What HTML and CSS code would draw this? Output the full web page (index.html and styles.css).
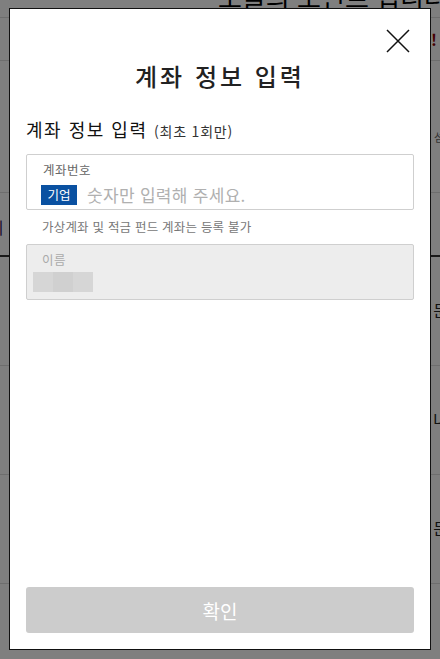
FILE: index.html
```html
<!DOCTYPE html>
<html lang="ko">
<head>
<meta charset="utf-8">
<link rel="stylesheet" href="styles.css">
</head>
<body>
<div class="page">
  <div class="page-head"><span class="page-title">오늘의 포인트 입니다</span></div>
  <div class="row row-a"><span class="frag frag-a">!</span></div>
  <div class="row row-b"><span class="frag frag-b">섬</span></div>
  <div class="row row-c"><span class="frag frag-c">니</span></div>
  <div class="row row-d"><span class="frag frag-d">문</span></div>
  <div class="row row-d"><span class="frag frag-d">나</span></div>
  <div class="row row-d"><span class="frag frag-d">문</span></div>
</div>
<div class="overlay"></div>
<div class="modal">
  <div class="modal-top">
    <button class="close" aria-label="닫기">
      <svg width="24" height="24" viewBox="0 0 24 24"><path d="M1 1 L23 23 M23 1 L1 23" stroke="#111" stroke-width="1.5" fill="none"/></svg>
    </button>
  </div>
  <h1 class="modal-title">계좌 정보 입력</h1>
  <div class="modal-body">
    <div class="section-label">계좌 정보 입력 <small>(최초 1회만)</small></div>
    <div class="field">
      <div class="field-label">계좌번호</div>
      <div class="field-row">
        <span class="bank">기업</span>
        <span class="placeholder">숫자만 입력해 주세요.</span>
      </div>
    </div>
    <p class="hint">가상계좌 및 적금 펀드 계좌는 등록 불가</p>
    <div class="field disabled">
      <div class="field-label">이름</div>
      <div class="mosaic"><span></span><span class="m2"></span><span></span></div>
    </div>
  </div>
  <div class="modal-foot">
    <button class="confirm">확인</button>
  </div>
</div>
</body>
</html>
```
FILE: styles.css
```css
* { box-sizing: border-box; }
html, body { margin: 0; padding: 0; }
body {
  width: 440px;
  height: 659px;
  overflow: hidden;
  background: #fff;
  font-family: "Noto Sans CJK KR", "Noto Sans", sans-serif;
  color: #111;
}
.page { width: 440px; }
.page-head {
  height: 34px;
  border-bottom: 1px solid #dcdcdc;
  padding-left: 218px;
}
.page-title {
  display: block;
  font-size: 26px;
  line-height: 26px;
  margin-top: -16px;
  color: #000;
  white-space: nowrap;
}
.row { position: relative; border-bottom: 1px solid #dcdcdc; }
.row-a { height: 43px; }
.row-b { height: 132px; }
.row-c { height: 64px; border-bottom: 2px solid #333; }
.row-d { height: 109px; }
.frag { position: absolute; font-size: 16px; line-height: 16px; color: #222; }
.frag-a { right: 3px; top: 13px; color: #8b0000; font-weight: bold; }
.frag-b { right: -4px; top: 68px; font-size: 11px; color: #666; }
.frag-c { left: -11px; top: 26px; color: #3a1860; }
.frag-d { right: -8px; top: 45px; }

.overlay {
  position: fixed;
  inset: 0;
  background: rgba(0,0,0,0.5);
}
.modal {
  position: fixed;
  left: 9px;
  top: 8px;
  width: 422px;
  height: 642px;
  background: #fff;
  border: 1px solid #111;
  display: flex;
  flex-direction: column;
  padding: 0 16px 16px;
}
.modal-top {
  display: flex;
  justify-content: flex-end;
  padding-top: 20px;
  height: 44px;
}
.close {
  width: 24px; height: 24px; padding: 0; border: 0; background: none;
  margin-right: 4px;
}
.close svg { display: block; }
.modal-title {
  margin: 6px 0 0;
  text-align: center;
  font-size: 24px;
  line-height: 34px;
  font-weight: 500;
  letter-spacing: 3px;
  color: #222;
}
.modal-body { flex: 1; padding-top: 24px; }
.section-label {
  font-size: 18px;
  line-height: 24px;
  letter-spacing: 1.5px;
  color: #111;
}
.section-label small { font-size: 14px; letter-spacing: 0.8px; color: #333; }
.field {
  margin-top: 11px;
  height: 56px;
  border: 1px solid #cfcfcf;
  border-radius: 2px;
  padding: 6px 14px 0;
}
.field-label { font-size: 12.5px; line-height: 18px; color: #666; padding-left: 2px; letter-spacing: 0.5px; }
.field-row { display: flex; align-items: center; gap: 10px; margin-top: 3px; }
.bank {
  background: #0a51a1;
  color: #fff;
  font-size: 12.5px;
  width: 36px;
  height: 20px;
  line-height: 20px;
  text-align: center;
}
.placeholder { font-size: 17px; color: #b0b0b0; letter-spacing: 0.3px; }
.hint { margin: 8px 0 0 16px; font-size: 12.5px; line-height: 18px; color: #777; letter-spacing: 0.2px; }
.field.disabled {
  background: #ededed;
  padding-left: 6px;
  margin-top: 8px;
}
.field.disabled .field-label { color: #aaa; padding-left: 9px; }
.mosaic { display: flex; margin-top: 3px; }
.mosaic span { width: 20px; height: 20px; background: #d6d6d6; }
.mosaic .m2 { background: #d0d0d0; }
.confirm {
  width: 100%;
  height: 46px;
  border: 0;
  border-radius: 3px;
  background: #cccccc;
  color: #fff;
  font-family: inherit;
  font-size: 19px;
}
```
